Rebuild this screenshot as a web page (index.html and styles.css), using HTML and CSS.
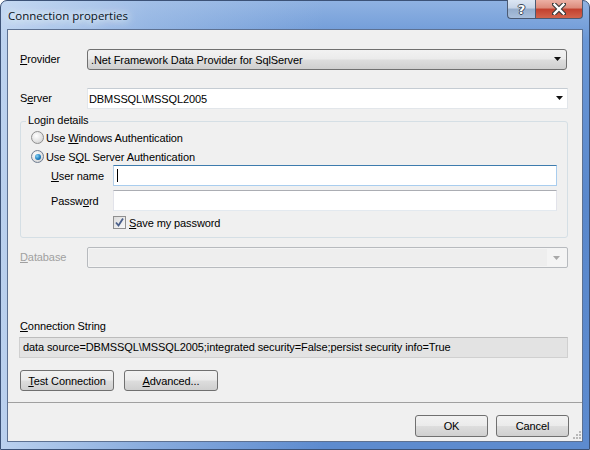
FILE: index.html
```html
<!DOCTYPE html>
<html>
<head>
<meta charset="utf-8">
<link rel="stylesheet" href="styles.css">
</head>
<body>
<div class="window">
  <div class="titlebar">
    <span class="title">Connection properties</span>
    <div class="caption-btns">
      <div class="cbtn help">?</div>
      <div class="cbtn close">
        <svg width="14" height="12" viewBox="0 0 14 12"><path d="M2 1 L12 11 M12 1 L2 11" stroke="#3b3b3b" stroke-width="4.5" stroke-linecap="square"/><path d="M2.5 1.5 L11.5 10.5 M11.5 1.5 L2.5 10.5" stroke="#fff" stroke-width="2.4" stroke-linecap="square"/></svg>
      </div>
    </div>
  </div>
  <div class="client">
    <div class="content">
      <div class="row row-provider">
        <span class="lbl"><u>P</u>rovider</span>
        <div class="combo combo-btn"><span class="ctext">.Net Framework Data Provider for SqlServer</span><svg class="arrow" width="7" height="4" viewBox="0 0 7 4"><path d="M0 0H7L3.5 4Z" fill="#111"/></svg></div>
      </div>
      <div class="row row-server">
        <span class="lbl">S<u>e</u>rver</span>
        <div class="combo combo-edit"><span class="ctext">DBMSSQL\MSSQL2005</span><svg class="arrow" width="7" height="4" viewBox="0 0 7 4"><path d="M0 0H7L3.5 4Z" fill="#111"/></svg></div>
      </div>
      <div class="group">
        <span class="group-title">Login details</span>
        <div class="radio-row r1"><span class="radio"></span><span>Use <u>W</u>indows Authentication</span></div>
        <div class="radio-row r2"><span class="radio on"><span class="dot"></span></span><span>Use S<u>Q</u>L Server Authentication</span></div>
        <div class="field-row f-user"><span class="flbl"><u>U</u>ser name</span><div class="input focus"><span class="caret"></span></div></div>
        <div class="field-row f-pass"><span class="flbl">Passw<u>o</u>rd</span><div class="input"></div></div>
        <div class="check-row"><span class="check"><svg width="11" height="11" viewBox="0 0 11 11"><path d="M2 5.5 L4.5 8.5 L9 1.5" stroke="#4a5f8a" stroke-width="1.8" fill="none"/></svg></span><span><u>S</u>ave my password</span></div>
      </div>
      <div class="row row-db">
        <span class="lbl disabled"><u>D</u>atabase</span>
        <div class="combo combo-dis"><span class="dis-main"></span><span class="dis-btn"><svg width="7" height="4" viewBox="0 0 7 4"><path d="M0 0H7L3.5 4Z" fill="#a8a8a8"/></svg></span></div>
      </div>
      <div class="cs-label"><u>C</u>onnection String</div>
      <div class="cs-box">data source=DBMSSQL\MSSQL2005;integrated security=False;persist security info=True</div>
      <div class="btn-row">
        <div class="btn btn-test"><span><u>T</u>est Connection</span></div>
        <div class="btn btn-adv"><span><u>A</u>dvanced...</span></div>
      </div>
    </div>
    <div class="footer">
      <div class="btn btn-ok"><span>OK</span></div>
      <div class="btn btn-cancel"><span>Cancel</span></div>
      <svg class="grip" width="10" height="10" viewBox="0 0 10 10"><g fill="#b8b8b8"><rect x="8" y="2" width="2" height="2"/><rect x="5" y="5" width="2" height="2"/><rect x="8" y="5" width="2" height="2"/><rect x="2" y="8" width="2" height="2"/><rect x="5" y="8" width="2" height="2"/><rect x="8" y="8" width="2" height="2"/></g></svg>
    </div>
  </div>
</div>
</body>
</html>
```
FILE: styles.css
```css
html, body { margin: 0; padding: 0; background: #fff; }
body { width: 590px; height: 450px; overflow: hidden; font-family: "Liberation Sans", Arial, sans-serif; font-size: 11px; letter-spacing: -0.1px; color: #000; }
u { text-decoration: underline; text-underline-offset: 1px; }

.window {
  box-sizing: border-box;
  width: 590px; height: 450px;
  padding: 0 6px 7px 6px;
  display: flex; flex-direction: column;
  border: 1px solid #3c5277;
  border-radius: 7px 7px 0 0;
  background:
    linear-gradient(to right, rgba(210,226,246,0.8) 0, rgba(180,204,236,0.5) 25%, rgba(120,160,215,0) 55%),
    linear-gradient(#8fb2e2 0, #6a97d6 40px, #5a88cc 200px, #5d8bcf 100%);
}
.titlebar {
  height: 28px; flex: none;
  display: flex; align-items: flex-start;
}
.title {
  margin: 7px 0 0 1px;
  font-family: "Open Sans", "Liberation Sans", sans-serif;
  font-size: 11.5px; letter-spacing: 0; line-height: 16px; color: #0a1420;
  text-shadow: 0 0 6px #eaf2fb, 0 0 10px #eaf2fb, 0 0 14px #dfeaf8;
}
.caption-btns { margin-left: auto; display: flex; margin-top: -1px; }
.cbtn {
  height: 19px; box-sizing: border-box;
  border: 1px solid #4b5a73; border-top: none;
  display: flex; align-items: center; justify-content: center;
}
.help {
  width: 28px; border-radius: 0 0 0 4px; border-right: none;
  background: linear-gradient(#dce6f3 0, #c6d4e7 45%, #95adcc 50%, #a9bfdc 100%);
  color: #fff; font-family: "DejaVu Sans", sans-serif; font-weight: bold; font-size: 13px;
  text-shadow: 1px 0 0 #3a4658, -1px 0 0 #3a4658, 0 1px 0 #3a4658, 0 -1px 0 #3a4658;
}
.close {
  width: 48px; border-radius: 0 0 4px 0;
  background: linear-gradient(#ecb0a4 0, #dc8a7a 45%, #c2402e 50%, #d2644c 100%);
}

.client {
  flex: 1; box-sizing: border-box;
  background: #f0f0f0;
  border: 1px solid #5d7192;
  display: flex; flex-direction: column;
}
.content { padding: 0 14px 0 12px; display: flex; flex-direction: column; }

.row { display: flex; align-items: center; height: 21px; }
.row-provider { margin-top: 19px; }
.row-server { margin-top: 18px; }
.lbl { width: 67px; flex: none; line-height: 13px; }
.lbl.disabled { color: #a0a0a0; }

.combo {
  flex: 1; height: 21px; box-sizing: border-box;
  display: flex; align-items: center;
}
.ctext { flex: 1; white-space: nowrap; overflow: hidden; }
.combo-btn {
  border: 1px solid #707070; border-radius: 3px;
  background: linear-gradient(#f2f2f2 0, #ebebeb 48%, #dddddd 52%, #cfcfcf 100%);
  padding: 0 5px 0 3px;
  margin-right: 1px;
}
.combo-edit {
  background: #fff;
  border: 1px solid #e2e6ea; border-top-color: #c5ccd3;
  padding: 0 4px 0 1px;
}
.arrow { flex: none; margin-bottom: 1px; }
.combo-dis {
  border: 1px solid #b7babe; border-radius: 2px;
  background: #f4f4f4; padding: 1px;
}
.dis-main { flex: 1; height: 100%; background: #eeeeee; }
.dis-btn { width: 19px; height: 100%; display: flex; align-items: center; justify-content: center; background: #f4f4f4; }

.group {
  margin-top: 12px;
  border: 1px solid #d5dfe5; border-radius: 3px;
  display: flex; flex-direction: column;
  padding: 0 10px 7px 10px;
}
.group-title {
  align-self: flex-start;
  margin: -8px 0 0 -5px; padding: 0 2px;
  background: #f0f0f0; line-height: 13px;
}
.radio-row { display: flex; align-items: center; height: 17px; }
.r1 { margin-top: 2px; }
.r2 { margin-top: 2px; }
.radio {
  width: 11px; height: 11px; border-radius: 50%;
  border: 1px solid #8f8f8f;
  background: radial-gradient(circle at 40% 35%, #ffffff 0, #e6e6e6 50%, #c9c9c9 100%);
  margin-right: 2px; flex: none;
  display: flex; align-items: center; justify-content: center;
}
.radio.on { border-color: #6f7d91; }
.dot { width: 6px; height: 6px; border-radius: 50%; background: radial-gradient(circle at 35% 35%, #8ad3f5 0, #1f7fc0 55%, #0e4f8a 100%); }

.field-row { display: flex; align-items: center; height: 21px; }
.f-pass { margin-top: 4px; }
.flbl { width: 62px; padding-left: 20px; flex: none; }
.input {
  flex: 1; height: 21px; box-sizing: border-box; background: #fff;
  border: 1px solid #e2e3ea; border-top-color: #abadb3; border-bottom-color: #e3e9ef;
  display: flex; align-items: center;
}
.input.focus { border-color: #a9cdee; border-top-color: #3d7bad; border-left-color: #b5cfe7; }
.caret { width: 1px; height: 13px; background: #000; margin-left: 3px; }

.check-row { display: flex; align-items: center; height: 15px; margin-top: 4px; padding-left: 82px; }
.check {
  width: 11px; height: 11px; border: 1px solid #8f8f8f; margin-right: 3px;
  background: linear-gradient(135deg, #dcdcdc, #f8f8f8);
  display: flex; align-items: center; justify-content: center;
}

.row-db { margin-top: 9px; }
.combo-dis { margin-right: 0; }

.cs-label { margin-top: 52px; line-height: 13px; height: 13px; }
.cs-box {
  margin-top: 4px; height: 21px; box-sizing: border-box;
  background: #e3e3e3; border: 1px solid #d0d0d0; border-top-color: #bcbcbc;
  padding: 0 3px; line-height: 19px; white-space: nowrap; overflow: hidden;
  margin-left: -1px; margin-right: 0;
}

.btn {
  height: 21px; box-sizing: border-box;
  border: 1px solid #707070; border-radius: 3px;
  background: linear-gradient(#f2f2f2 0, #ebebeb 48%, #dddddd 52%, #cfcfcf 100%);
  display: flex; align-items: center; justify-content: center;
}
.btn-row { display: flex; gap: 10px; margin-top: 12px; }
.btn-test, .btn-adv { width: 94px; }

.footer {
  flex: 1;
  margin-top: 11px;
  border-top: 1px solid #a0a0a0;
  display: flex; align-items: flex-start;
  padding: 12px 1px 0 0;
  justify-content: flex-end;
}
.btn-ok, .btn-cancel { width: 73px; height: 22px; }
.btn-cancel { margin-left: 8px; }
.grip { align-self: flex-end; margin: 0 0 2px 2px; }
```
